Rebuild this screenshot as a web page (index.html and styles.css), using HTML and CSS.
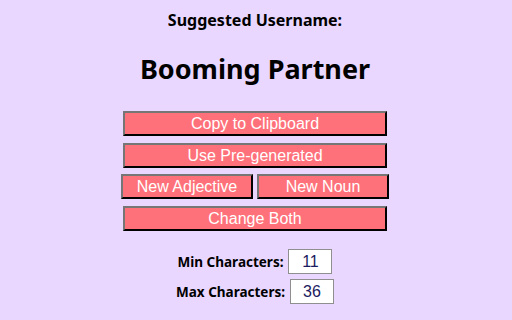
FILE: index.html
```html
<!DOCTYPE html>
<html lang="en">
<head>
    <meta charset="UTF-8">
    <meta name="viewport" content="width=device-width, initial-scale=1.0">
    <title>Username Generator</title>
    <link rel="stylesheet" href="styles.css">
</head>
<body>
    <div class="app">
        <h2 class="caption">Suggested Username:</h2>
        <h1 class="username" id="username">Booming Partner</h1>

        <!-- Actions -->
        <div class="actions">
            <button class="btn wide">Copy to Clipboard</button>
            <button class="btn wide">Use Pre-generated</button>
            <div class="pair">
                <button class="btn half">New Adjective</button>
                <button class="btn half">New Noun</button>
            </div>
            <button class="btn wide">Change Both</button>
        </div>

        <!-- Length limits -->
        <div class="limits">
            <div class="limit">
                <label for="min-chars">Min Characters:</label>
                <input type="text" id="min-chars" class="min" value="11">
            </div>
            <div class="limit">
                <label for="max-chars">Max Characters:</label>
                <input type="text" id="max-chars" class="max" value="36">
            </div>
        </div>
    </div>
</body>
</html>
```

FILE: styles.css
```css
body {
    margin: 0;
    padding: 0;
    background-color: #e9d7ff;
    font-family: 'Noto Sans', sans-serif;
    color: #000;
}

.app {
    display: flex;
    flex-direction: column;
    align-items: center;
    padding: 9px 2px 0 0;
}

.caption {
    margin: 0;
    font-size: 16px;
    line-height: 22px;
    font-weight: bold;
}

.username {
    margin: 20px 0 0;
    font-size: 27px;
    line-height: 36px;
    font-weight: bold;
}

.actions {
    display: flex;
    flex-direction: column;
    align-items: center;
    gap: 7px;
    margin-top: 24px;
}

.pair {
    display: flex;
    gap: 4px;
    margin-top: -1px;
}

.btn {
    box-sizing: border-box;
    height: 25px;
    padding: 1px 0 0;
    background: #ff717a;
    color: #fff;
    font-family: 'Liberation Sans', Arial, sans-serif;
    font-size: 16px;
    border: 2px solid;
    border-color: #767676 #000 #000 #767676;
    cursor: pointer;
}

.btn.wide {
    width: 264px;
}

.btn.half {
    width: 132px;
}

.limits {
    display: flex;
    flex-direction: column;
    align-items: center;
    gap: 5px;
    margin-top: 18px;
}

.limit {
    display: flex;
    align-items: center;
    gap: 5px;
}

.limit label {
    font-size: 13.5px;
    font-weight: bold;
}

.limit input {
    box-sizing: border-box;
    width: 44px;
    height: 25px;
    border: 1px solid #8f8f8f;
    background: #fff;
    text-align: center;
    font-family: 'Liberation Sans', Arial, sans-serif;
    font-size: 16px;
    color: #1b1b5e;
    padding: 0;
}
```
